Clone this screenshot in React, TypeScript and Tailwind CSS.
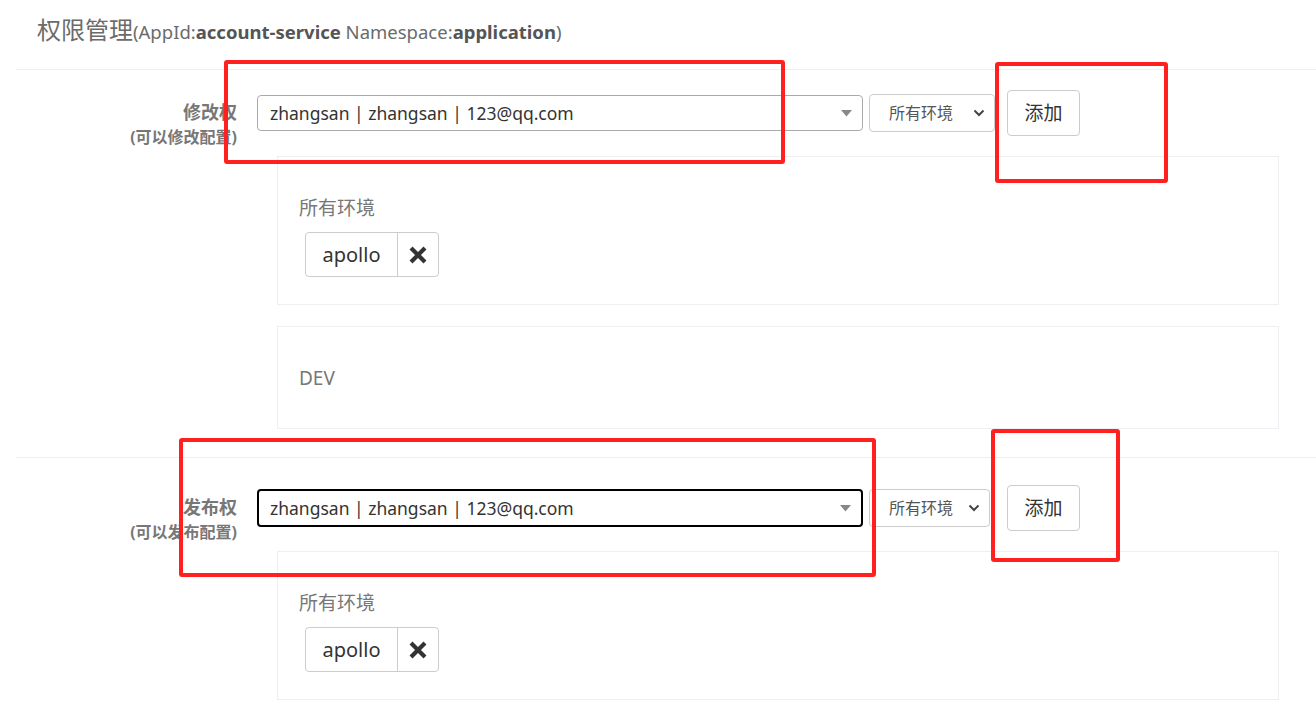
import React from 'react';

type Grant = { env: string; users: string[] };

type Section = {
  title: string;
  hint: string;
  focused: boolean;
  envWidth: string;
  pt: string;
  grants: Grant[];
};

const sections: Section[] = [
  {
    title: '修改权',
    hint: '(可以修改配置)',
    focused: false,
    envWidth: 'w-[126px]',
    pt: 'pt-[20px]',
    grants: [
      { env: '所有环境', users: ['apollo'] },
      { env: 'DEV', users: [] },
    ],
  },
  {
    title: '发布权',
    hint: '(可以发布配置)',
    focused: true,
    envWidth: 'w-[121px]',
    pt: 'pt-[27px]',
    grants: [{ env: '所有环境', users: ['apollo'] }],
  },
];

function RemoveIcon() {
  return (
    <svg width="18" height="18" viewBox="0 0 18 18">
      <path d="M3.5 3.5 L14.5 14.5 M14.5 3.5 L3.5 14.5" stroke="#333" strokeWidth="4.2" strokeLinecap="square" />
    </svg>
  );
}

function UserTag({ name }: { name: string }) {
  return (
    <div className="flex w-fit h-[45px] border border-[#ccc] rounded-[4px] ml-[6px] mt-[12px]">
      <span className="w-[91px] flex items-center justify-center text-[20px] text-[#333]">{name}</span>
      <span className="w-[41px] flex items-center justify-center border-l border-[#ccc]">
        <RemoveIcon />
      </span>
    </div>
  );
}

function GrantBox({ grant, first }: { grant: Grant; first: boolean }) {
  return (
    <div
      className={`ml-[261px] w-[1002px] border border-[#eeeef3] pl-[21px] pt-[39px] ${
        grant.users.length ? 'h-[149px]' : 'h-[103px]'
      } ${first ? 'mt-[20px]' : 'mt-[21px]'}`}
    >
      <div className="h-[24px] leading-[24px] text-[19px] text-[#777]">{grant.env}</div>
      {grant.users.map((u) => (
        <UserTag key={u} name={u} />
      ))}
    </div>
  );
}

function PermissionSection({ s, last }: { s: Section; last: boolean }) {
  return (
    <div className={`border-t border-[#eee] ${s.pt} ${last ? '' : 'pb-[28px]'}`}>
      <div className="flex items-center h-[46px]">
        <div className="w-[221px] h-[46px] self-start pt-[10px] text-right font-bold text-[#777] leading-[25px]">
          <div className="h-[25px] text-[18px]">{s.title}</div>
          <div className="h-[25px] text-[16px] whitespace-nowrap">{s.hint}</div>
        </div>
        <div
          className={`ml-[20px] w-[606px] flex items-center justify-between pr-[10px] rounded-[4px] ${
            s.focused ? 'h-[38px] border-2 border-black pl-[11px]' : 'h-[36px] border border-[#aaa] pl-[12px]'
          }`}
        >
          <span className="text-[17.5px] text-[#333]">zhangsan | zhangsan | 123@qq.com</span>
          <svg width="11" height="7" viewBox="0 0 11 7">
            <path d="M0 0 H11 L5.5 6.5 Z" fill="#888" />
          </svg>
        </div>
        <div
          className={`ml-[6px] ${s.envWidth} h-[38px] border border-[#ccc] rounded-[4px] flex items-center justify-between pl-[19px] pr-[9px]`}
        >
          <span className="text-[16px] text-[#555]">所有环境</span>
          <svg width="12" height="8" viewBox="0 0 12 8">
            <path d="M1.5 1.5 L6 6 L10.5 1.5" stroke="#444" strokeWidth="2" fill="none" />
          </svg>
        </div>
        <button
          className={`${s.focused ? 'ml-[17px]' : 'ml-[12px]'} w-[73px] h-[46px] border border-[#ccc] rounded-[4px] text-[19px] text-[#333] bg-white`}
        >
          添加
        </button>
      </div>
      {s.grants.map((g, i) => (
        <GrantBox key={g.env} grant={g} first={i === 0} />
      ))}
    </div>
  );
}

export default function App() {
  return (
    <div
      className="relative w-[1316px] h-[715px] overflow-hidden bg-white"
      style={{ fontFamily: '"Noto Sans", "Noto Sans CJK SC", sans-serif' }}
    >
      <div className="pl-4">
        <div className="h-[69px] pl-[21px] pt-[12px] text-[#6b6b6b] whitespace-nowrap">
          <span className="text-[24px]">权限管理</span>
          <span className="text-[18.5px]">
            (AppId:<b className="text-[#555]">account-service</b> Namespace:<b className="text-[#555]">application</b>)
          </span>
        </div>
        {sections.map((s, i) => (
          <PermissionSection key={s.title} s={s} last={i === sections.length - 1} />
        ))}
      </div>

      {/* annotation boxes */}
      <div className="absolute left-[224px] top-[60px] w-[561px] h-[104px] border-4 border-[#ff2020] rounded-[3px]" />
      <div className="absolute left-[995px] top-[62px] w-[173px] h-[121px] border-4 border-[#ff2020] rounded-[3px]" />
      <div className="absolute left-[179px] top-[438px] w-[697px] h-[139px] border-4 border-[#ff2020] rounded-[3px]" />
      <div className="absolute left-[991px] top-[429px] w-[129px] h-[133px] border-4 border-[#ff2020] rounded-[3px]" />
    </div>
  );
}
